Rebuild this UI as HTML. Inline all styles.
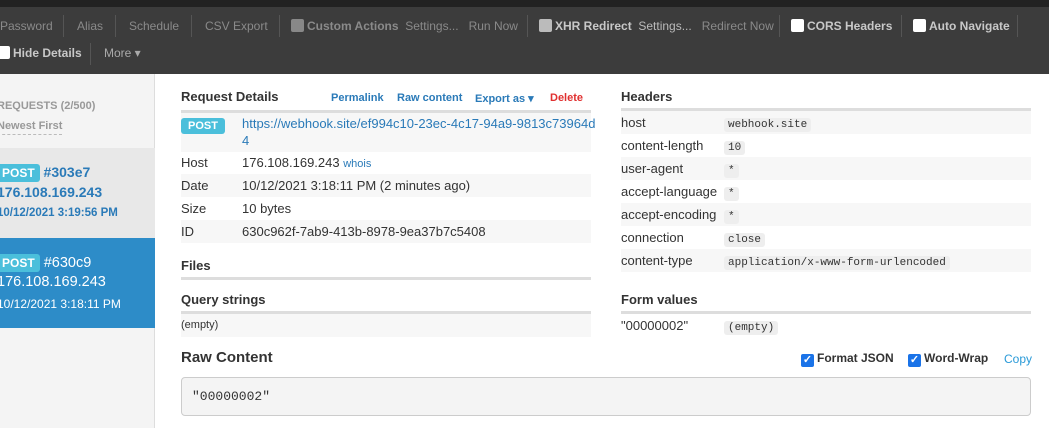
<!DOCTYPE html>
<html><head><meta charset="utf-8"><style>
*{margin:0;padding:0;box-sizing:border-box}
body{width:1049px;height:428px;overflow:hidden;background:#fff;font-family:"Liberation Sans",sans-serif;font-size:13px;color:#333;position:relative}
.a{position:absolute;white-space:nowrap}
.nav{color:#8a8a8a;font-size:12px}
.nb{color:#c8c8c8;font-weight:bold}
.sep{position:absolute;width:1px;height:22px;background:#555}
.cb{display:inline-block;width:13px;height:13px;border-radius:2px;vertical-align:-2px;margin-right:3px}
.post{display:inline-block;background:#4bbfdb;color:#fff;font-weight:bold;font-size:11px;border-radius:3px;padding:2px 5px;}
.row{position:absolute;height:23px;line-height:23px}
.g{background:#f7f7f7}
code{font-family:"Liberation Mono",monospace;font-size:11px;background:#eee;border-radius:3px;padding:1px 4px;color:#333}
.h{font-weight:bold;font-size:13px}
.line{position:absolute;height:3px;background:#ddd}
.lnk{color:#2a7ab8;font-weight:bold;font-size:11px}
.chk{display:inline-block;width:13px;height:13px;background:#1a73e8;border-radius:2px;color:#fff;font-size:11px;line-height:13px;text-align:center;vertical-align:-1px;margin-right:3px}
</style></head><body>
<div class="a" style="left:0;top:0;width:1049px;height:7px;background:#222"></div>
<div class="a" style="left:0;top:7px;width:1049px;height:67px;background:#3c3c3c"></div>
<div class="a nav" style="left:0;top:19px">Password</div>
<div class="sep" style="left:63px;top:15px"></div>
<div class="a nav" style="left:77px;top:19px">Alias</div>
<div class="sep" style="left:115px;top:15px"></div>
<div class="a nav" style="left:129px;top:19px">Schedule</div>
<div class="sep" style="left:191px;top:15px"></div>
<div class="a nav" style="left:205px;top:19px">CSV Export</div>
<div class="sep" style="left:279px;top:15px"></div>
<div class="a nav" style="left:291px;top:19px"><span class="cb" style="background:#888"></span><span style="color:#8a8a8a;font-weight:bold">Custom Actions</span>&nbsp; Settings...&nbsp;&nbsp; Run Now</div>
<div class="sep" style="left:527px;top:15px"></div>
<div class="a nav" style="left:539px;top:19px"><span class="cb" style="background:#bbb"></span><span class="nb">XHR Redirect</span>&nbsp; <span style="color:#bbb">Settings...</span>&nbsp;&nbsp; Redirect Now</div>
<div class="sep" style="left:779px;top:15px"></div>
<div class="a nav" style="left:791px;top:19px"><span class="cb" style="background:#fff"></span><span class="nb">CORS Headers</span></div>
<div class="sep" style="left:901px;top:15px"></div>
<div class="a nav" style="left:913px;top:19px"><span class="cb" style="background:#fff"></span><span class="nb">Auto Navigate</span></div>
<div class="sep" style="left:1017px;top:15px"></div>
<div class="a nav" style="left:-3px;top:46px"><span class="cb" style="background:#fff"></span><span class="nb">Hide Details</span></div>
<div class="sep" style="left:90px;top:43px"></div>
<div class="a nav" style="left:104px;top:46px;color:#aaa">More ▾</div>

<div class="a" style="left:0;top:74px;width:155px;height:354px;background:#f4f4f4;border-right:1px solid #ddd"></div>
<div class="a" style="left:-3px;top:100px;color:#999;font-weight:bold;font-size:11px">REQUESTS (2/500)</div>
<div class="a" style="left:-3px;top:120px;color:#999;font-weight:bold;font-size:11px;border-bottom:1px dashed #bbb;padding-bottom:2px">Newest First</div>
<div class="a" style="left:0;top:148px;width:155px;height:90px;background:#e8e8e8"></div>
<div class="a" style="left:-6px;top:164px;color:#2a7ab8;font-weight:bold;font-size:14px"><span class="post" style="font-size:12px;padding:2px 5px 2px 8px">POST</span> #303e7</div>
<div class="a" style="left:-3px;top:184px;color:#2a7ab8;font-weight:bold;font-size:14px">176.108.169.243</div>
<div class="a" style="left:-3px;top:207px;color:#2a7ab8;font-weight:bold;font-size:11.5px">10/12/2021 3:19:56 PM</div>
<div class="a" style="left:0;top:238px;width:155px;height:90px;background:#2d8cc8"></div>
<div class="a" style="left:-6px;top:254px;color:#fff;font-size:14.5px"><span class="post" style="font-size:12px;padding:2px 5px 2px 8px">POST</span> #630c9</div>
<div class="a" style="left:-3px;top:274px;color:#fff;font-size:14.5px">176.108.169.243</div>
<div class="a" style="left:-3px;top:297px;color:#fff;font-size:12px">10/12/2021 3:18:11 PM</div>

<div class="a h" style="left:181px;top:89px">Request Details</div>
<div class="a lnk" style="left:331px;top:92px">Permalink</div>
<div class="a lnk" style="left:397px;top:92px">Raw content</div>
<div class="a lnk" style="left:475px;top:92px">Export as ▾</div>
<div class="a lnk" style="left:550px;top:92px;color:#e03030">Delete</div>
<div class="line" style="left:181px;top:110px;width:410px"></div>
<div class="a g" style="left:181px;top:113px;width:410px;height:39px"></div>
<div class="a" style="left:181px;top:117px"><span class="post" style="padding:2px 7px">POST</span></div>
<div class="a" style="left:242px;top:115px;color:#2a7ab8;line-height:17px;white-space:normal;width:358px;word-break:break-all">https://webhook.site/ef994c10-23ec-4c17-94a9-9813c73964d4</div>
<div class="row" style="left:181px;top:151px;width:410px">Host<span class="a" style="left:61px">176.108.169.243 <span style="color:#2a7ab8;font-size:11px">whois</span></span></div>
<div class="row g" style="left:181px;top:174px;width:410px">Date<span class="a" style="left:61px">10/12/2021 3:18:11 PM (2 minutes ago)</span></div>
<div class="row" style="left:181px;top:197px;width:410px">Size<span class="a" style="left:61px">10 bytes</span></div>
<div class="row g" style="left:181px;top:220px;width:410px">ID<span class="a" style="left:61px">630c962f-7ab9-413b-8978-9ea37b7c5408</span></div>
<div class="a h" style="left:181px;top:258px">Files</div>
<div class="line" style="left:181px;top:277px;width:410px"></div>
<div class="a h" style="left:181px;top:292px">Query strings</div>
<div class="line" style="left:181px;top:311px;width:410px"></div>
<div class="a g" style="left:181px;top:314px;width:410px;height:23px;font-size:11px;line-height:23px">(empty)</div>

<div class="a h" style="left:621px;top:89px">Headers</div>
<div class="line" style="left:621px;top:108px;width:410px"></div>
<div class="row g" style="left:621px;top:111px;width:410px">host<span class="a" style="left:103px"><code>webhook.site</code></span></div>
<div class="row" style="left:621px;top:134px;width:410px">content-length<span class="a" style="left:103px"><code>10</code></span></div>
<div class="row g" style="left:621px;top:157px;width:410px">user-agent<span class="a" style="left:103px"><code>*</code></span></div>
<div class="row" style="left:621px;top:180px;width:410px">accept-language<span class="a" style="left:103px"><code>*</code></span></div>
<div class="row g" style="left:621px;top:203px;width:410px">accept-encoding<span class="a" style="left:103px"><code>*</code></span></div>
<div class="row" style="left:621px;top:226px;width:410px">connection<span class="a" style="left:103px"><code>close</code></span></div>
<div class="row g" style="left:621px;top:249px;width:410px">content-type<span class="a" style="left:103px"><code>application/x-www-form-urlencoded</code></span></div>
<div class="a h" style="left:621px;top:292px">Form values</div>
<div class="line" style="left:621px;top:311px;width:410px"></div>
<div class="row" style="left:621px;top:314px;width:410px">"00000002"<span class="a" style="left:103px"><code>(empty)</code></span></div>

<div class="a" style="left:181px;top:349px;font-weight:bold;font-size:15px">Raw Content</div>
<div class="a" style="left:801px;top:351px;font-weight:bold;font-size:12px"><span class="chk">✓</span>Format JSON</div>
<div class="a" style="left:908px;top:351px;font-weight:bold;font-size:12px"><span class="chk">✓</span>Word-Wrap</div>
<div class="a" style="left:1004px;top:352px;color:#2a9ad8;font-size:12px">Copy</div>
<div class="a" style="left:181px;top:377px;width:850px;height:39px;background:#f4f4f4;border:1px solid #ccc;border-radius:4px;font-family:'Liberation Mono',monospace;font-size:13px;line-height:37px;padding-left:10px">"00000002"</div>
</body></html>
